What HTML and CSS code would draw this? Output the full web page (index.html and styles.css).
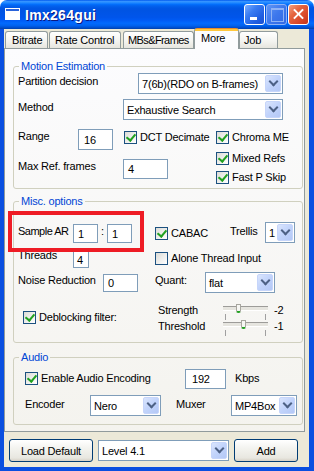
FILE: index.html
```html
<!DOCTYPE html>
<html lang="en">
<head>
    <meta charset="UTF-8">
    <meta name="viewport" content="width=device-width, initial-scale=1.0">
    <title>Imx264gui</title>
    <link rel="stylesheet" href="styles.css">
</head>
<body>
<div class="window">
    <div class="titlebar">
        <svg class="app-icon" width="15" height="12" viewBox="0 0 15 12">
            <rect x="0" y="0" width="15" height="12" fill="#ffffff"/>
            <rect x="1" y="1" width="13" height="2" fill="#2a63da"/>
        </svg>
        <span class="title">Imx264gui</span>
        <div class="caption-buttons">
            <span class="cap-btn cap-min"></span>
            <span class="cap-btn cap-max"></span>
            <span class="cap-btn cap-close"></span>
        </div>
    </div>

    <div class="client">
        <div class="tabs">
            <div class="tab tab-bitrate">Bitrate</div>
            <div class="tab tab-rate">Rate Control</div>
            <div class="tab tab-mbs">MBs&amp;Frames</div>
            <div class="tab tab-more active">More</div>
            <div class="tab tab-job">Job</div>
        </div>

        <div class="page">
            <!-- Motion Estimation -->
            <fieldset class="group group-me">
                <legend>Motion Estimation</legend>
                <div class="row">
                    <span class="lbl lbl-partition">Partition decision</span>
                    <div class="combo combo-partition"><span>7(6b)(RDO on B-frames)</span><i class="drop"></i></div>
                </div>
                <div class="row me-row2">
                    <span class="lbl lbl-method">Method</span>
                    <div class="combo combo-method"><span>Exhaustive Search</span><i class="drop"></i></div>
                </div>
                <div class="row me-lower">
                    <div class="me-left">
                        <div class="me-range">
                            <span class="lbl lbl-range">Range</span>
                            <div class="tb tb-range">16</div>
                            <label class="check check-dct"><i class="box checked"></i>DCT Decimate</label>
                        </div>
                        <div class="me-maxref">
                            <span class="lbl lbl-maxref">Max Ref. frames</span>
                            <div class="tb tb-maxref">4</div>
                        </div>
                    </div>
                    <div class="me-right">
                        <label class="check check-chroma"><i class="box checked"></i>Chroma ME</label>
                        <label class="check check-mixed"><i class="box checked"></i>Mixed Refs</label>
                        <label class="check check-fastp"><i class="box checked"></i>Fast P Skip</label>
                    </div>
                </div>
            </fieldset>

            <!-- Misc. options -->
            <fieldset class="group group-misc">
                <legend>Misc. options</legend>
                <div class="row misc-row1">
                    <span class="lbl lbl-sar">Sample AR</span>
                    <div class="tb tb-sar">1</div>
                    <span class="lbl colon">:</span>
                    <div class="tb tb-sar">1</div>
                    <label class="check check-cabac"><i class="box checked"></i>CABAC</label>
                    <span class="lbl lbl-trellis">Trellis</span>
                    <div class="combo combo-trellis"><span>1</span><i class="drop"></i></div>
                </div>
                <div class="row misc-row2">
                    <span class="lbl lbl-threads">Threads</span>
                    <div class="tb tb-threads">4</div>
                    <label class="check check-alone"><i class="box"></i>Alone Thread Input</label>
                </div>
                <div class="row misc-row3">
                    <span class="lbl lbl-noise">Noise Reduction</span>
                    <div class="tb tb-noise">0</div>
                    <span class="lbl lbl-quant">Quant:</span>
                    <div class="combo combo-quant"><span>flat</span><i class="drop"></i></div>
                </div>
                <div class="row misc-row4">
                    <label class="check check-deblock"><i class="box checked"></i>Deblocking filter:</label>
                    <div class="sliders">
                        <div class="slider-row">
                            <span class="lbl lbl-slider">Strength</span>
                            <div class="slider"><i class="thumb thumb-strength"></i></div>
                            <span class="lbl slider-value">-2</span>
                        </div>
                        <div class="slider-row">
                            <span class="lbl lbl-slider">Threshold</span>
                            <div class="slider"><i class="thumb thumb-threshold"></i></div>
                            <span class="lbl slider-value">-1</span>
                        </div>
                    </div>
                </div>
            </fieldset>

            <!-- Audio -->
            <fieldset class="group group-audio">
                <legend>Audio</legend>
                <div class="row audio-row1">
                    <label class="check check-audio"><i class="box checked"></i>Enable Audio Encoding</label>
                    <div class="tb tb-kbps">192</div>
                    <span class="lbl lbl-kbps">Kbps</span>
                </div>
                <div class="row audio-row2">
                    <span class="lbl lbl-encoder">Encoder</span>
                    <div class="combo combo-encoder"><span>Nero</span><i class="drop"></i></div>
                    <span class="lbl lbl-muxer">Muxer</span>
                    <div class="combo combo-muxer"><span>MP4Box</span><i class="drop"></i></div>
                </div>
            </fieldset>
        </div>

        <div class="bottom">
            <div class="btn btn-load">Load Default</div>
            <div class="combo combo-level"><span>Level 4.1</span><i class="drop"></i></div>
            <div class="btn btn-add">Add</div>
        </div>
    </div>

    <div class="annotation"></div>
</div>
</body>
</html>
```

FILE: styles.css
```css
* {
    box-sizing: border-box;
}
body {
    margin: 0;
    background: #ffffff;
    font-family: "Liberation Sans", Arial, sans-serif;
    font-size: 11px;
    letter-spacing: -0.2px;
    color: #000;
}
.window {
    position: relative;
    width: 314px;
    height: 471px;
}

/* title bar */
.titlebar {
    height: 29px;
    display: flex;
    align-items: center;
    padding: 0 5px;
    border-radius: 7px 7px 0 0;
    background: linear-gradient(to bottom, #0058ee 0%, #3593ff 5%, #288eff 8%, #127dff 12%, #036ffc 15%, #0262ee 20%, #0057e5 28%, #0054e3 35%, #0055eb 60%, #005bf5 70%, #026afe 80%, #0062ef 88%, #0052d6 94%, #0040ab 100%);
}
.app-icon {
    flex: none;
    margin-top: -1px;
}
.title {
    margin-left: 5px;
    color: #fff;
    font-weight: bold;
    font-size: 14px;
    letter-spacing: 0.3px;
    text-shadow: 1px 1px #0a1883;
}
.caption-buttons {
    margin-left: auto;
    align-self: flex-start;
    margin-top: 4px;
    display: flex;
    gap: 1px;
}
.cap-btn {
    position: relative;
    width: 21px;
    height: 21px;
    border: 1px solid #fff;
    border-radius: 3px;
}
.cap-min {
    background: linear-gradient(135deg, #7aaeff 0%, #3a7cf2 35%, #2160e2 70%, #1a50d2 100%);
}
.cap-min::after {
    content: "";
    position: absolute;
    left: 5px;
    top: 12px;
    width: 7px;
    height: 3px;
    background: #fff;
}
.cap-max {
    border-color: #8fb2f5;
    background: linear-gradient(135deg, #5e95f5 0%, #3d77ec 50%, #3268e4 100%);
}
.cap-max::after {
    content: "";
    position: absolute;
    left: 4px;
    top: 3px;
    width: 11px;
    height: 11px;
    border: 1px solid #8fb2f5;
    border-top-width: 2px;
}
.cap-close {
    background: linear-gradient(135deg, #f3a083 0%, #e5653f 35%, #d8482a 70%, #c3351b 100%);
}
.cap-close::before,
.cap-close::after {
    content: "";
    position: absolute;
    left: 3px;
    top: 8px;
    width: 13px;
    height: 2px;
    background: #fff;
    transform: rotate(45deg);
}
.cap-close::after {
    transform: rotate(-45deg);
}

/* client area */
.client {
    height: 442px;
    background: #ece9d8;
    border: 4px solid #0a4fe0;
    border-top: 0;
    border-right-width: 5px;
}

/* tabs */
.tabs {
    position: relative;
    z-index: 1;
    display: flex;
    align-items: flex-end;
    height: 19px;
    padding-left: 1px;
}
.tab {
    height: 17px;
    line-height: 16px;
    padding-left: 5px;
    border: 1px solid #919b9c;
    border-bottom: 0;
    border-radius: 3px 3px 0 0;
    background: linear-gradient(#ffffff, #f3f3ef 60%, #e6e5de);
    white-space: nowrap;
    overflow: hidden;
}
.tab-bitrate {
    width: 43px;
    margin-right: 1px;
    padding-left: 6px;
}
.tab-rate {
    width: 72px;
    margin-right: 2px;
}
.tab-mbs {
    width: 71px;
    padding-left: 4px;
    letter-spacing: -0.6px;
}
.tab-more {
    width: 45px;
    padding-left: 6px;
}
.tab-job {
    width: 39px;
    padding-left: 4px;
}
.tab.active {
    height: 21px;
    margin-bottom: -1px;
    line-height: 19px;
    padding-top: 1px;
    border-top: 0;
    background: linear-gradient(#e68b2c 0, #e68b2c 1px, #ffc73c 1px, #ffc73c 3px, #fcfcfe 3px);
}

.page {
    width: 301px;
    height: 384px;
    padding: 0 1px 0 8px;
    border: 1px solid #919b9c;
    background: linear-gradient(#fcfcfe, #f4f3ee);
}

/* group boxes */
.group {
    margin: 0;
    padding: 0;
    width: 290px;
    min-width: 0;
    border: 1px solid #d0d0bf;
    border-radius: 3px;
}
.group legend {
    margin-left: 5px;
    padding: 0 2px;
    line-height: 13px;
    color: #0046d5;
}
.group-me {
    margin-top: 11px;
    height: 129px;
}
.group-misc {
    margin-top: 6px;
    height: 148px;
}
.group-audio {
    margin-top: 8px;
    height: 74px;
}

.row {
    display: flex;
    align-items: flex-start;
    padding-left: 4px;
}
.lbl {
    line-height: 13px;
    white-space: nowrap;
}

/* text boxes */
.tb {
    display: flex;
    align-items: center;
    padding-left: 4px;
    border: 1px solid #7f9db9;
    background: #fff;
}

/* combo boxes */
.combo {
    display: flex;
    align-items: center;
    height: 21px;
    padding-left: 3px;
    border: 1px solid #7f9db9;
    background: #fff;
    white-space: nowrap;
}
.combo .drop {
    display: flex;
    align-items: center;
    justify-content: center;
    flex: none;
    margin-left: auto;
    margin-right: 1px;
    width: 16px;
    height: 17px;
    border: 1px solid #c6d5fa;
    border-radius: 2px;
    background: linear-gradient(135deg, #dae5fd 0%, #c1d3fb 50%, #b4c8f6 100%);
}
.combo .drop::after {
    content: "";
    width: 5px;
    height: 5px;
    margin-top: -4px;
    border-right: 2px solid #4d6185;
    border-bottom: 2px solid #4d6185;
    transform: rotate(45deg);
}

/* check boxes */
.check {
    display: flex;
    align-items: center;
    height: 13px;
    line-height: 13px;
    white-space: nowrap;
}
.box {
    position: relative;
    flex: none;
    width: 13px;
    height: 13px;
    margin-right: 3px;
    border: 1px solid #1c5180;
    background: linear-gradient(135deg, #dcdcd7, #ffffff);
}
.box.checked::after {
    content: "";
    position: absolute;
    left: 3px;
    top: 0px;
    width: 4px;
    height: 7px;
    border-right: 2px solid #21a121;
    border-bottom: 2px solid #21a121;
    transform: rotate(40deg);
}

/* buttons */
.btn {
    display: flex;
    align-items: center;
    justify-content: center;
    height: 23px;
    border: 1px solid #003c74;
    border-radius: 3px;
    background: linear-gradient(#ffffff, #f3f3ef 40%, #e8e7e0 85%, #d6d0c5);
}

/* motion estimation */
.lbl-partition {
    width: 120px;
    margin-top: 2px;
}
.combo-partition {
    width: 145px;
}
.me-row2 {
    margin-top: 5px;
}
.lbl-method {
    width: 105px;
    margin-top: 2px;
}
.combo-method {
    width: 160px;
}
.me-lower {
    margin-top: 9px;
}
.me-left {
    width: 198px;
}
.me-range,
.me-maxref {
    display: flex;
    align-items: flex-start;
}
.lbl-range {
    width: 60px;
    margin-top: 1px;
}
.tb-range {
    width: 35px;
    height: 21px;
    padding-left: 5px;
}
.check-dct {
    margin-left: 11px;
    margin-top: 2px;
}
.me-maxref {
    margin-top: 9px;
}
.lbl-maxref {
    width: 105px;
    margin-top: 1px;
}
.tb-maxref {
    width: 45px;
    height: 20px;
}
.check-chroma {
    margin-top: 2px;
}
.check-mixed {
    margin-top: 8px;
}
.check-fastp {
    margin-top: 6px;
}

/* misc options */
.misc-row1 {
    margin-top: 14px;
}
.lbl-sar {
    width: 55px;
    margin-top: 3px;
    letter-spacing: -0.5px;
}
.tb-sar {
    width: 25px;
    height: 19px;
    margin-top: 2px;
}
.colon {
    width: 9px;
    margin-top: 3px;
    text-align: center;
}
.check-cabac {
    width: 75px;
    margin-left: 23px;
    margin-top: 5px;
}
.lbl-trellis {
    width: 35px;
    margin-top: 3px;
}
.combo-trellis {
    width: 30px;
}
.misc-row2 {
    margin-top: 6px;
}
.lbl-threads {
    width: 55px;
}
.tb-threads {
    width: 16px;
    height: 17px;
    margin-top: 2px;
    padding-left: 3px;
}
.check-alone {
    margin-left: 66px;
    margin-top: 3px;
}
.misc-row3 {
    margin-top: 4px;
}
.lbl-noise {
    width: 85px;
    margin-top: 2px;
}
.tb-noise {
    width: 35px;
    height: 18px;
    margin-top: 2px;
}
.lbl-quant {
    width: 50px;
    margin-left: 17px;
    margin-top: 2px;
}
.combo-quant {
    width: 70px;
}
.misc-row4 {
    margin-top: 11px;
}
.check-deblock {
    width: 135px;
    margin-left: 5px;
    margin-top: 7px;
}
.slider-row {
    display: flex;
    align-items: flex-start;
    height: 16px;
}
.lbl-slider {
    width: 65px;
}
.slider {
    position: relative;
    width: 45px;
    height: 16px;
}
.slider::before {
    content: "";
    position: absolute;
    left: 0;
    right: 0;
    top: 2px;
    height: 3px;
    border-top: 1px solid #9d9c99;
    border-bottom: 1px solid #ffffff;
    background: #e6e5df;
}
.slider::after {
    content: "";
    position: absolute;
    left: 2px;
    right: 2px;
    top: 10px;
    height: 6px;
    border-left: 1px dashed #a0a0a0;
    border-right: 1px dashed #a0a0a0;
}
.thumb {
    position: absolute;
    top: 0;
    width: 5px;
    height: 9px;
    border: 1px solid #a7a69f;
    border-bottom: 2px solid #21a121;
    border-radius: 0 0 3px 3px;
    background: #f7f7f4;
}
.thumb-strength {
    left: 13px;
}
.thumb-threshold {
    left: 18px;
}
.slider-value {
    margin-left: 6px;
}

/* audio */
.audio-row1 {
    margin-top: 5px;
}
.check-audio {
    width: 160px;
    margin-left: 7px;
    margin-top: 3px;
}
.tb-kbps {
    width: 41px;
    height: 20px;
    padding-left: 6px;
}
.lbl-kbps {
    margin-left: 9px;
    margin-top: 3px;
}
.audio-row2 {
    margin-top: 6px;
}
.lbl-encoder {
    width: 65px;
    margin-left: 7px;
    margin-top: 3px;
}
.combo-encoder {
    width: 71px;
}
.lbl-muxer {
    width: 55px;
    margin-left: 15px;
    margin-top: 3px;
}
.combo-muxer {
    width: 66px;
}

/* bottom buttons */
.bottom {
    display: flex;
    align-items: flex-start;
    gap: 5px;
    padding: 7px 0 0 5px;
}
.btn-load {
    width: 84px;
}
.combo-level {
    width: 131px;
    margin-top: 1px;
}
.btn-add {
    width: 64px;
}

/* red highlight drawn over the form */
.annotation {
    position: absolute;
    left: 8px;
    top: 211px;
    width: 136px;
    height: 41px;
    border: 4px solid #ee1c25;
}
```
